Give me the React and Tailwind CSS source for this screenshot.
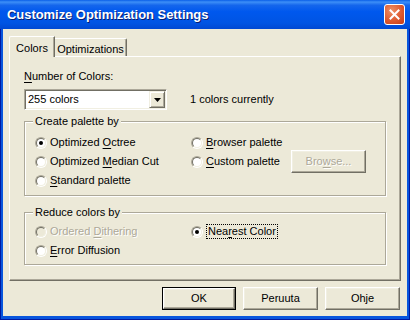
import React from "react";

const F = "font-['Liberation_Sans',Arial,sans-serif] text-[11px] leading-[13px] text-black";

function Radio({ checked, disabled }) {
  return (
    <span className="relative inline-block w-[12px] h-[12px] rounded-full border border-t-[#ACA899] border-l-[#ACA899] border-b-white border-r-white shrink-0">
      <span
        className={`absolute inset-0 rounded-full border border-t-[#716F64] border-l-[#716F64] border-b-[#F1EFE2] border-r-[#F1EFE2] ${
          disabled ? "bg-[#ECE9D8]" : "bg-white"
        }`}
      >
        {checked && (
          <span className="absolute left-[2px] top-[2px] w-[4px] h-[4px] rounded-full bg-black" />
        )}
      </span>
    </span>
  );
}

function RadioRow({ checked, disabled, children, focus }) {
  return (
    <div className="flex items-center h-[17px]">
      <Radio checked={checked} disabled={disabled} />
      <span
        className={`ml-[3px] ${
          disabled ? "text-[#ACA899] [text-shadow:1px_1px_0_#fff]" : ""
        } ${focus ? "border border-dotted border-black px-[1px]" : ""}`}
      >
        {children}
      </span>
    </div>
  );
}

function U({ children }) {
  return <span className="underline underline-offset-[2px]">{children}</span>;
}

function Button({ children, def, disabled, w = "w-[75px]" }) {
  const inner = (
    <div
      className={`h-full w-full flex items-center justify-center bg-[#ECE9D8] border border-t-white border-l-white border-b-[#716F64] border-r-[#716F64] shadow-[inset_-1px_-1px_0_#ACA899,inset_1px_1px_0_#F1EFE2] ${
        disabled ? "text-[#ACA899] [text-shadow:1px_1px_0_#fff]" : ""
      }`}
    >
      {children}
    </div>
  );
  if (def)
    return <div className={`${w} h-[23px] border border-black`}>{inner}</div>;
  return <div className={`${w} h-[23px]`}>{inner}</div>;
}

function GroupBox({ label, className, children }) {
  return (
    <div
      className={`relative w-[362px] border border-[#ACA899] shadow-[inset_1px_1px_0_#fff,1px_1px_0_#fff] ${className}`}
    >
      <span className="absolute left-[8px] -top-[7px] bg-[#ECE9D8] px-[2px]">
        {label}
      </span>
      {children}
    </div>
  );
}

export default function App() {
  return (
    <div
      className={`w-[410px] h-[320px] flex flex-col bg-[#0855DD] shadow-[inset_1px_0_0_#0019A0,inset_-1px_0_0_#0019A0,inset_0_-1px_0_#0019A0] ${F}`}
    >
      {/* Title bar */}
      <div className="h-[29px] shrink-0 flex items-center justify-between pl-[7px] pr-[5px] bg-[linear-gradient(to_bottom,#0A5FE8_0%,#3D8FF7_7%,#1566EC_18%,#0058EE_40%,#0054E3_80%,#0048D2_100%)]">
        <span className="font-['Liberation_Sans',Arial,sans-serif] font-bold text-[13px] text-white tracking-[-0.05px] [text-shadow:1px_1px_0_#0A1E6E]">
          Customize Optimization Settings
        </span>
        <div className="w-[21px] h-[21px] rounded-[3px] border border-white bg-[radial-gradient(circle_at_35%_30%,#EE9066_0%,#DE5A30_55%,#C43B17_100%)] flex items-center justify-center">
          <svg width="11" height="11" viewBox="0 0 11 11">
            <path d="M1.5 1.5 L9.5 9.5 M9.5 1.5 L1.5 9.5" stroke="#fff" strokeWidth="2" strokeLinecap="square" />
          </svg>
        </div>
      </div>

      {/* Body */}
      <div className="flex-1 mx-[3px] mb-[4px] bg-[#ECE9D8] flex flex-col pt-[7px] pl-[6px] pr-[6px]">
        {/* Tabs */}
        <div className="relative z-10 flex items-end h-[21px]">
          <div className="w-[46px] h-[21px] bg-[#ECE9D8] border-t border-l border-white rounded-tl-[2px] border-r border-r-[#716F64] shadow-[inset_-1px_0_0_#ACA899] flex justify-center pt-[5px]">
            Colors
          </div>
          <div className="w-[72px] h-[18px] mb-[1px] bg-[#ECE9D8] border-t border-white rounded-tr-[2px] border-r border-r-[#716F64] shadow-[inset_-1px_0_0_#ACA899] flex justify-center pt-[4px]">
            Optimizations
          </div>
        </div>

        {/* Panel */}
        <div className="-mt-[1px] h-[225px] border-t border-l border-white border-r border-b border-r-[#716F64] border-b-[#716F64] shadow-[inset_-1px_-1px_0_#ACA899] pl-[14px] flex flex-col">
          <div className="mt-[13px] h-[13px]">
            <U>N</U>umber of Colors:
          </div>

          <div className="mt-[6px] flex items-center">
            <div className="w-[143px] h-[21px] bg-white border border-t-[#ACA899] border-l-[#ACA899] border-b-white border-r-white shadow-[inset_1px_1px_0_#716F64,inset_-1px_-1px_0_#F1EFE2] flex items-center p-[1px]">
              <span className="flex-1 pl-[2px]">255 colors</span>
              <div className="w-[16px] h-[17px] bg-[#ECE9D8] border border-t-[#F1EFE2] border-l-[#F1EFE2] border-b-[#716F64] border-r-[#716F64] shadow-[inset_1px_1px_0_#fff,inset_-1px_-1px_0_#ACA899] flex items-center justify-center">
                <svg width="7" height="4" viewBox="0 0 7 4">
                  <path d="M0 0 H7 L3.5 4 Z" fill="#000" />
                </svg>
              </div>
            </div>
            <span className="ml-[23px]">1 colors currently</span>
          </div>

          <GroupBox label="Create palette by" className="mt-[11px] h-[75px] pt-[12px] pl-[10px]">
            <div className="flex">
              <div className="w-[156px] flex flex-col gap-[2px]">
                <RadioRow checked>
                  Optimized <U>O</U>ctree
                </RadioRow>
                <RadioRow>
                  Optimized <U>M</U>edian Cut
                </RadioRow>
                <RadioRow>
                  <U>S</U>tandard palette
                </RadioRow>
              </div>
              <div className="flex flex-col gap-[2px]">
                <RadioRow>
                  <U>B</U>rowser palette
                </RadioRow>
                <div className="flex items-center h-[17px]">
                  <div className="w-[100px]">
                    <RadioRow>
                      <U>C</U>ustom palette
                    </RadioRow>
                  </div>
                  <div className="-mt-[1px]">
                    <Button disabled>
                      Bro<U>w</U>se...
                    </Button>
                  </div>
                </div>
              </div>
            </div>
          </GroupBox>

          <GroupBox label="Reduce colors by" className="mt-[16px] h-[53px] pt-[10px] pl-[10px]">
            <div className="flex">
              <div className="w-[156px] flex flex-col gap-[2px]">
                <RadioRow disabled>
                  Ordered <U>D</U>ithering
                </RadioRow>
                <RadioRow>
                  <U>E</U>rror Diffusion
                </RadioRow>
              </div>
              <div className="flex flex-col">
                <RadioRow checked focus>
                  Nea<U>r</U>est Color
                </RadioRow>
              </div>
            </div>
          </GroupBox>
        </div>

        {/* Buttons */}
        <div className="mt-[6px] flex justify-end gap-[7px] pr-[1px]">
          <Button def w="w-[74px]">OK</Button>
          <Button>Peruuta</Button>
          <Button>Ohje</Button>
        </div>
      </div>
    </div>
  );
}
